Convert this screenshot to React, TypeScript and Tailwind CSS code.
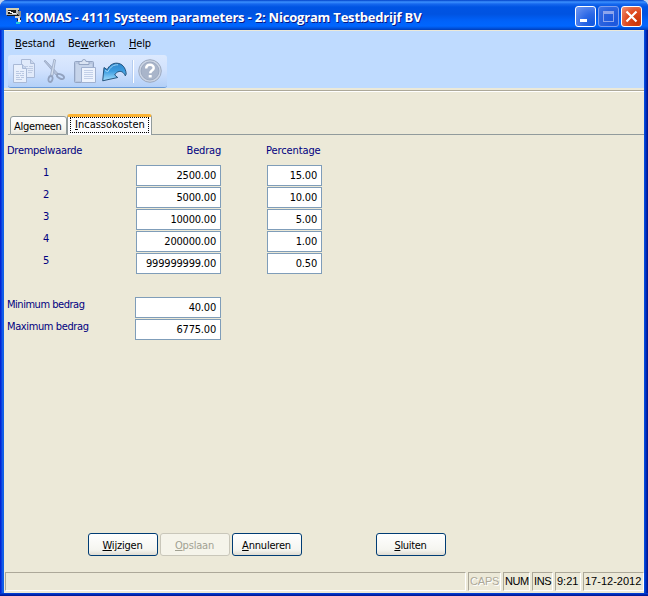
import type { ReactNode } from 'react';
import clsx from 'clsx';

const rows = [
  { nr: 1, bedrag: '2500.00', percentage: '15.00' },
  { nr: 2, bedrag: '5000.00', percentage: '10.00' },
  { nr: 3, bedrag: '10000.00', percentage: '5.00' },
  { nr: 4, bedrag: '200000.00', percentage: '1.00' },
  { nr: 5, bedrag: '999999999.00', percentage: '0.50' },
];

const limits = [
  { label: 'Minimum bedrag', value: '40.00', tracking: 'tracking-[-0.47px]' },
  { label: 'Maximum bedrag', value: '6775.00', tracking: 'tracking-[-0.39px]' },
];

function Key({ children }: { children: ReactNode }) {
  return <span className="underline decoration-1 underline-offset-1">{children}</span>;
}

function AppIcon() {
  return (
    <svg width="16" height="16" viewBox="0 0 16 16" shapeRendering="crispEdges">
      <path d="M0 0h13v8H1V6H0z" fill="#1c1c1c" />
      <path d="M0 0h13v2H0z" fill="#d6cfae" />
      <path d="M0 2h2v5H0zM2 6h9v1H2zM10 2h2v4h-2z" fill="#b9b9b9" />
      <path d="M2 3h3v1H2zM4 4h3v1H4zM6 5h4v1H6z" fill="#f4f4f4" />
      <path d="M12 3h3v6h-2V7h-1z" fill="#8d8d8d" />
      <path d="M9 8h5v2H9z" fill="#d0d0d0" />
      <path d="M12 10h2v2h1v2h-3z" fill="#f0f0f0" />
      <path d="M14 10h1v2h-1zM11 11h1v2h-1z" fill="#222" />
      <path d="M10 14h4v2h-4z" fill="#22c7d8" />
    </svg>
  );
}

function TitleBar() {
  return (
    <header className="flex h-[30px] shrink-0 items-start rounded-t-[7px] bg-[linear-gradient(180deg,#0040c8_0px,#3c91ff_2px,#1668ee_4px,#0054e3_7px,#0053e1_14px,#0062fa_21px,#0066ff_26px,#0054e0_28px,#003dbb_30px)] pr-[6px] pl-[6px]">
      <div className="mt-2">
        <AppIcon />
      </div>
      <h1 className="mt-[8px] ml-[3px] grow whitespace-nowrap font-['Open_Sans',sans-serif] text-[13px] leading-[18px] font-bold tracking-[-0.2px] text-white [text-shadow:1px_1px_0_#0a1883]">
        KOMAS - 4111 Systeem parameters - 2: Nicogram Testbedrijf BV
      </h1>
      <div className="mt-[6px] flex gap-[2px]">
        <div className="size-[21px] rounded-[3px] border border-white bg-[radial-gradient(circle_at_85%_85%,#1459df_0%,#2c68e6_40%,#7299f2_100%)]">
          <div className="mt-[12px] ml-[4px] h-[3px] w-[7px] bg-white" />
        </div>
        <div className="size-[21px] rounded-[3px] border border-[#7d9eee] bg-[radial-gradient(circle_at_80%_80%,#1a56dd_0%,#2a62df_60%,#4175e6_100%)]">
          <div className="mt-[4px] ml-[4px] h-[11px] w-[11px] border border-t-[3px] border-[#8da5ec]" />
        </div>
        <div className="size-[21px] rounded-[3px] border border-white bg-[radial-gradient(circle_at_80%_80%,#c93507_0%,#df4a20_50%,#ef9278_100%)]">
          <svg width="19" height="19" viewBox="0 0 19 19">
            <path d="M4.500 4.500l10 10M14.500 4.500l-10 10" stroke="#fff" strokeWidth="2.200" />
          </svg>
        </div>
      </div>
    </header>
  );
}

function CopyIcon() {
  return (
    <svg width="24" height="24" viewBox="0 0 24 24">
      <path d="M8.500 .5h9l4 4v14h-13z" fill="#e1eafa" stroke="#a9b9d6" />
      <path d="M17.500 .5v4h4" fill="#c9d6ec" stroke="#a9b9d6" />
      <path d="M12 7.500h3M16 7.500h4M14 9.500h6M15 11.500h5M15 13.500h4" stroke="#bfcce4" />
      <path d="M.5 5.500h9l4 4v14H.5z" fill="#e8effc" stroke="#a9b9d6" />
      <path d="M9.500 5.500v4h4" fill="#c9d6ec" stroke="#a9b9d6" />
      <path d="M3 12.500h3M7 12.500h4M3 14.500h5M9 14.500h2M3 16.500h3M7 16.500h4M3 18.500h4M8 18.500h3M3 20.500h6" stroke="#bac8e2" />
    </svg>
  );
}

function CutIcon() {
  return (
    <svg width="23" height="24" viewBox="0 0 23 24" fill="none">
      <path d="M1 2l1.500-.5L15 14.500l-2 1.500z" fill="#b4c1d9" stroke="#97a6c2" strokeWidth=".8" />
      <path d="M11 0l1.500 1L10 16.500l-2.500-.5z" fill="#d4dfef" stroke="#97a6c2" strokeWidth=".8" />
      <ellipse cx="7.500" cy="20" rx="2" ry="3" transform="rotate(15 7.500 20)" stroke="#92a2bf" strokeWidth="1.800" />
      <ellipse cx="17.500" cy="17.500" rx="3.800" ry="2" transform="rotate(25 17.500 17.500)" stroke="#92a2bf" strokeWidth="1.800" />
    </svg>
  );
}

function PasteIcon() {
  return (
    <svg width="22" height="24" viewBox="0 0 22 24">
      <rect x=".5" y="2.500" width="19" height="21" rx="1" fill="#b7c6e0" stroke="#94a5c3" />
      <path d="M2 5h16v17H2z" fill="#c6d4ea" />
      <path d="M5 5.500V2.500h3Q8 .5 10 .5t2 2h3v3z" fill="#dae4f3" stroke="#94a5c3" />
      <path d="M7.500 8.500h14v15h-14z" fill="#edf3fd" stroke="#a0b1d0" />
      <path d="M10 11.500h9M10 13.500h9M10 15.500h9M10 17.500h9M10 19.500h9" stroke="#c3d0e8" />
    </svg>
  );
}

function UndoIcon() {
  return (
    <svg width="25" height="20" viewBox="0 0 25 20">
      <defs>
        <linearGradient id="undo" x1="0" y1="0" x2="0" y2="1">
          <stop offset="0" stopColor="#2f86cc" />
          <stop offset=".45" stopColor="#3c9ce0" />
          <stop offset="1" stopColor="#a4e0ff" />
        </linearGradient>
      </defs>
      <path
        d="M.7 18.800L2 5.500l3.200 2.200C7 3.500 11 .9 15 1.200c5 .3 8.700 4 9.200 10.800l-.9 1.800c-1.500-3.500-4-4.800-6.300-4.300-2 .4-3.500 1.800-4.300 3.500l3 2.500z"
        fill="url(#undo)"
        stroke="#17466f"
        strokeWidth=".9"
        strokeLinejoin="round"
      />
      <path d="M3 8.500l2.800 1.200C8.500 4.500 12 2.500 16 2.800" fill="none" stroke="#9ed6f8" />
    </svg>
  );
}

function HelpIcon() {
  return (
    <svg width="24" height="24" viewBox="0 0 24 24" fill="none">
      <circle cx="12" cy="12" r="11.300" fill="#cbd4e3" stroke="#9ca9bf" />
      <circle cx="12" cy="12" r="9" fill="#a9b5ca" stroke="#94a2ba" strokeWidth=".8" />
      <path d="M8.200 9.500c0-5 7.800-4.700 7.500-.4-.2 2.500-3.500 2.400-3.500 5.100" stroke="#fff" strokeWidth="2.500" />
      <path d="M10.700 16h3v2.500h-3z" fill="#fff" />
    </svg>
  );
}

function Toolbar() {
  return (
    <div className="ml-[3px] flex h-[33px] w-[159px] items-start rounded-[3px] border-b border-[#6a9bd8] bg-[linear-gradient(180deg,#dce9fe_0%,#d2e2fd_45%,#b3d0f8_100%)] pt-[4px] pl-[5px]">
      <CopyIcon />
      <div className="ml-[6px]"><CutIcon /></div>
      <div className="ml-[8px]"><PasteIcon /></div>
      <div className="mt-[3px] ml-[6px]"><UndoIcon /></div>
      <div className="mt-[1px] ml-[5px] h-[23px] w-[2px] border-l border-[#b5cdf0] bg-white" />
      <div className="ml-[4px]"><HelpIcon /></div>
    </div>
  );
}

function Field({ value, className }: { value: string; className: string }) {
  return (
    <div
      className={clsx(
        'h-[21px] border border-[#7f9db9] bg-white pr-[4px] text-right leading-[20px] tracking-[-0.2px] text-black',
        className,
      )}
    >
      {value}
    </div>
  );
}

function PushButton({ disabled, className, children }: { disabled?: boolean; className?: string; children: ReactNode }) {
  return (
    <button
      disabled={disabled}
      className={clsx(
        'h-[23px] w-[70px] rounded-[3px] border pt-px pr-px text-center leading-[21px]',
        disabled
          ? 'border-[#c9c7ba] bg-[#f5f4ea] text-[#a1a192]'
          : 'border-[#003c74] bg-[linear-gradient(180deg,#ffffff_0%,#f5f5f0_75%,#dfdcd2_100%)] text-black',
        className,
      )}
    >
      {children}
    </button>
  );
}

function StatusCell({ className, children }: { className: string; children?: ReactNode }) {
  return (
    <div
      className={clsx(
        'h-[19px] border border-t-[#aca899] border-r-white border-b-white border-l-[#aca899] pl-px leading-[17px] whitespace-nowrap',
        className,
      )}
    >
      {children}
    </div>
  );
}

export default function App() {
  return (
    <div className="h-[596px] w-[648px] overflow-hidden bg-[#c3d5ee] font-['DejaVu_Sans_Condensed','DejaVu_Sans',sans-serif] text-[11px] leading-[14px]">
      <div className="flex h-full flex-col rounded-t-[7px] bg-[linear-gradient(90deg,#0019cf_0px,#0831d9_1px,#166aee_3px,#0855dd_4px,#0855dd_644px,#0040d8_645px,#001ea0_647px,#00138c_648px)]">
        <TitleBar />
        <div className="mr-[4px] ml-[4px] flex grow flex-col bg-[#ece9d8]">
          <div className="mt-px h-[57px] bg-[#bfdbff] pl-px">
            <nav className="flex h-[24px] items-start pt-[6px] pl-[10px] text-black">
              <span className="w-[53px] tracking-[-0.1px]"><Key>B</Key>estand</span>
              <span className="w-[61px] tracking-[-0.2px]">Be<Key>w</Key>erken</span>
              <span className="tracking-[-0.2px]"><Key>H</Key>elp</span>
            </nav>
            <Toolbar />
          </div>
          <div className="mt-[2px] h-[2px] shrink-0 border-t border-[#aca899] bg-white" />

          <div className="mt-[22px] ml-[4px] flex h-[21px] shrink-0 items-end">
            <div className="h-full w-[2px] border-b border-[#919b9c]" />
            <div className="h-[19px] w-[57px] rounded-t-[3px] border border-[#919b9c] bg-[linear-gradient(180deg,#ffffff_0%,#f3f2ea_80%,#e6e4d9_100%)] pl-[3px] leading-[19px] tracking-[-0.3px]">
              Al<Key>g</Key>emeen
            </div>
            <div className="h-[21px] w-[85px] rounded-t-[3px] border-x border-t-[3px] border-x-[#919b9c] border-t-[#f9b233] bg-[#fcfcfe] pl-[2px]">
              <div className="h-[16px] w-[79px] border border-dotted border-black pl-[4px] leading-[13px]">
                <Key>I</Key>ncassokosten
              </div>
            </div>
            <div className="h-full grow border-b border-[#919b9c]" />
          </div>

          <main className="flex grow flex-col pl-[3px] text-[#000080]">
            <div className="mt-[9px] flex h-[21px]">
              <span className="w-[129px] tracking-[-0.28px]">Drempelwaarde</span>
              <span className="w-[85px] text-right tracking-[-0.2px]">Bedrag</span>
              <span className="ml-[45px] tracking-[-0.1px]">Percentage</span>
            </div>
            {rows.map((row) => (
              <div key={row.nr} className="flex h-[22px] items-start">
                <span className="w-[129px] pt-px pl-[36px]">{row.nr}</span>
                <Field value={row.bedrag} className="w-[85px]" />
                <Field value={row.percentage} className="ml-[46px] w-[55px]" />
              </div>
            ))}
            <div className="mt-[22px]">
              {limits.map((limit) => (
                <div key={limit.label} className="flex h-[22px] items-start">
                  <span className={clsx('w-[128px] pt-px', limit.tracking)}>{limit.label}</span>
                  <Field value={limit.value} className="w-[86px]" />
                </div>
              ))}
            </div>
            <div className="mt-auto mb-[16px] flex gap-[2px] pl-[81px]">
              <PushButton className="tracking-[-0.2px]"><Key>W</Key>ijzigen</PushButton>
              <PushButton disabled className="tracking-[-0.2px]"><Key>O</Key>pslaan</PushButton>
              <PushButton className="tracking-[-0.2px]"><Key>A</Key>nnuleren</PushButton>
              <PushButton className="ml-[72px] tracking-[-0.3px]"><Key>S</Key>luiten</PushButton>
            </div>
          </main>

          <footer className="flex h-[21px] shrink-0 gap-[2px] pl-px font-['Liberation_Sans',Arial,sans-serif] text-black">
            <StatusCell className="w-[461px]" />
            <StatusCell className="w-[33px] tracking-[-0.2px] text-[#aca899] [text-shadow:1px_1px_0_#fff]">CAPS</StatusCell>
            <StatusCell className="w-[27px] tracking-[-0.5px]">NUM</StatusCell>
            <StatusCell className="w-[21px] tracking-[-0.4px]">INS</StatusCell>
            <StatusCell className="w-[26px]">9:21</StatusCell>
            <StatusCell className="w-[61px]">17-12-2012</StatusCell>
          </footer>
        </div>
        <div className="h-[3px] shrink-0 bg-[linear-gradient(180deg,#0046e0_0px,#0030c0_1px,#00138c_3px)]" />
      </div>
    </div>
  );
}
